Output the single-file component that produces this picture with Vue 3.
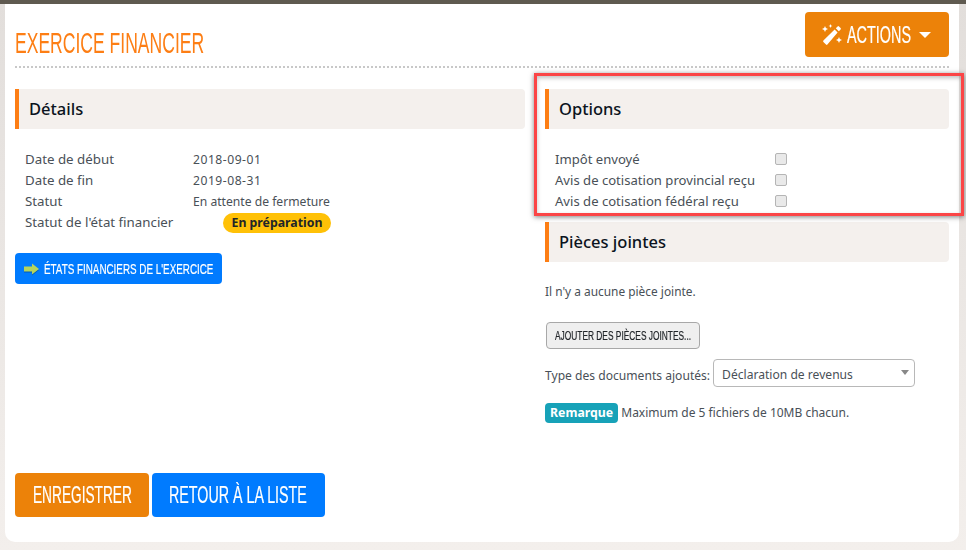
<script setup>
const details = [
  { label: 'Date de début', value: '2018-09-01', date: true },
  { label: 'Date de fin', value: '2019-08-31', date: true },
  { label: 'Statut', value: 'En attente de fermeture', date: false },
]
const options = ['Impôt envoyé', 'Avis de cotisation provincial reçu', 'Avis de cotisation fédéral reçu']
</script>

<template>
  <div class="page">
    <main class="card">
      <header class="top">
        <h1><span class="cond t-title">EXERCICE FINANCIER</span></h1>
        <button class="btn orange actions">
          <svg class="wand" viewBox="0 0 22 22" width="22" height="22" fill="#fff">
            <path d="M14.800 4.200 16.600 2.400a1 1 0 0 1 1.400 0l1.600 1.600a1 1 0 0 1 0 1.400l-1.800 1.800zM13.600 5.400 16.600 8.400 6.400 20.600a1 1 0 0 1-1.400 0L2.400 18a1 1 0 0 1 0-1.400z" />
            <path d="M4 2l.9 2.100L7 5l-2.100.9L4 8l-.9-2.100L1 5l2.100-.9zM9.500 0l.6 1.400 1.400.6-1.400.6-.6 1.400-.6-1.400-1.400-.6 1.400-.6zM18 13l.9 2.100 2.100.9-2.100.9-.9 2.100-.9-2.100-2.100-.9 2.100-.9z" />
          </svg>
          <span class="cond t-actions">ACTIONS</span>
          <i class="caret"></i>
        </button>
      </header>
      <div class="dots"></div>

      <div class="columns">
        <section class="left">
          <h2 class="bar">Détails</h2>
          <dl class="details">
            <div v-for="d in details" :key="d.label" class="row">
              <dt>{{ d.label }}</dt>
              <dd :class="{ date: d.date }">{{ d.value }}</dd>
            </div>
            <div class="row">
              <dt>Statut de l'état financier</dt>
              <dd><span class="pill">En préparation</span></dd>
            </div>
          </dl>
          <button class="btn blue small">
            <svg class="arrow" viewBox="0 0 15 12" width="15" height="12">
              <path d="M0 3.500h8V0.500L15 6l-7 5.500V8.500H0z" fill="#b5d35c" />
            </svg>
            <span class="cond t-states">ÉTATS FINANCIERS DE L'EXERCICE</span>
          </button>
        </section>

        <section class="right">
          <h2 class="bar">Options</h2>
          <div class="options">
            <label v-for="o in options" :key="o" class="opt">
              <span class="opt-label">{{ o }}</span>
              <span class="check"></span>
            </label>
          </div>
          <h2 class="bar second">Pièces jointes</h2>
          <p class="none">Il n'y a aucune pièce jointe.</p>
          <button class="add"><span class="cond t-add">AJOUTER DES PIÈCES JOINTES...</span></button>
          <div class="doc-type">
            <span class="doc-label">Type des documents ajoutés:</span>
            <div class="select">
              <span>Déclaration de revenus</span>
              <i class="sel-caret"></i>
            </div>
          </div>
          <p class="note"><span class="tag">Remarque</span> Maximum de 5 fichiers de 10MB chacun.</p>
        </section>
      </div>

      <footer class="foot">
        <button class="btn orange big save"><span class="cond t-save">ENREGISTRER</span></button>
        <button class="btn blue big back"><span class="cond t-back">RETOUR À LA LISTE</span></button>
      </footer>

      <div class="highlight"></div>
    </main>
  </div>
</template>

<style>
html, body { margin: 0; background: #f3efec; }
</style>

<style scoped>
.page {
  width: 966px;
  height: 550px;
  box-sizing: border-box;
  border-top: 4px solid #5f5a50;
  padding: 0 7px 8px 5px;
  background: linear-gradient(#e2dedb, #f3efec);
  font-family: "Noto Sans", "Open Sans", sans-serif;
  font-size: 12px;
  color: #495057;
  overflow: hidden;
}
.card {
  position: relative;
  height: 538px;
  box-sizing: border-box;
  background: #fff;
  border-radius: 0 0 10px 10px;
  padding: 8px 10px 0;
}
.top {
  display: flex;
  justify-content: space-between;
  align-items: flex-start;
  height: 51px;
}
h1 {
  margin: 14px 0 0;
  font-weight: 400;
  font-size: 29px;
  line-height: 34px;
  color: #fd7e14;
}
.cond {
  display: block;
  flex: none;
  white-space: nowrap;
  text-align: left;
  font-family: "Liberation Sans", sans-serif;
  transform-origin: left center;
  -webkit-text-stroke: 0.2px currentColor;
}
.t-title { width: 189px; transform: scaleX(0.605); -webkit-text-stroke: 0; }
.t-actions { width: 64px; transform: scaleX(0.6); }
.t-states { width: 170px; transform: scaleX(0.703); }
.t-add { width: 136px; transform: scaleX(0.643); }
.t-save { width: 98px; transform: scaleX(0.57); }
.t-back { width: 138px; transform: scaleX(0.595); margin-left: -1px; }
button { border: 0; cursor: pointer; padding: 0; }
.btn {
  display: inline-flex;
  align-items: center;
  justify-content: center;
  color: #fff;
  border-radius: 4px;
}
.orange { background: #ec8209; }
.blue { background: #007bff; }
.actions {
  width: 144px;
  height: 45px;
  font-size: 24px;
  gap: 4px;
  padding-right: 2px;
  box-sizing: border-box;
}
.wand, .arrow { flex: none; }
.arrow { filter: drop-shadow(0 1px 0 rgba(0, 40, 80, 0.4)); }
.caret {
  flex: none;
  margin-left: 4px;
  border: 6.500px solid transparent;
  border-top: 6px solid #fff;
  border-bottom: 0;
}
.dots {
  border-top: 2px dotted #c8c8c8;
  margin: 3px 0 0;
}
.columns {
  display: flex;
  margin-top: 21px;
  height: 384px;
}
.left { width: 510px; margin-right: 20px; }
.right { width: 404px; }
.bar {
  margin: 0;
  height: 40px;
  box-sizing: border-box;
  border-left: 4px solid #fd7e14;
  border-radius: 0 4px 4px 0;
  background: #f4f0ed;
  padding-left: 10px;
  font-size: 16.500px;
  font-weight: 500;
  line-height: 40px;
  color: #0b1320;
}
.details {
  margin: 20px 0 0 10px;
}
.row {
  display: flex;
  height: 21px;
  line-height: 21px;
  font-size: 13.300px;
}
dt { width: 168px; }
dd { margin: 0; font-size: 12.150px; flex: 1; }
dd.date { letter-spacing: 0.5px; }
.pill {
  display: inline-block;
  margin-left: 30px;
  height: 20px;
  line-height: 19px;
  padding: 0 8.500px;
  border-radius: 10px;
  background: #ffc107;
  color: #212529;
  font-weight: 700;
  font-size: 12.300px;
}
.small {
  margin-top: 20px;
  width: 207px;
  height: 31px;
  font-size: 14px;
  gap: 5px;
}
.options { margin: 19px 0 0 10px; height: 74px; }
.opt {
  display: flex;
  align-items: center;
  height: 21px;
  font-size: 13.100px;
}
.opt-label { width: 220px; }
.check {
  width: 12px;
  height: 12px;
  margin-top: 1px;
  box-sizing: border-box;
  background: #e9e9e9;
  border: 1px solid #b5b5b5;
  border-radius: 2px;
}
.none {
  margin: 21px 0 0;
  font-size: 11.900px;
  line-height: 16px;
}
.add {
  display: flex;
  align-items: center;
  justify-content: center;
  margin: 23px 0 0 1px;
  width: 154px;
  height: 27px;
  background: #efefef;
  border: 1px solid #a8a8a8;
  border-radius: 4px;
  color: #212529;
  font-size: 13px;
}
.doc-type {
  display: flex;
  align-items: center;
  gap: 3px;
  margin-top: 10px;
  font-size: 12.100px;
}
.doc-label { padding-top: 5px; }
.select {
  position: relative;
  width: 202px;
  height: 28px;
  box-sizing: border-box;
  border: 1px solid #b8b8b8;
  border-radius: 4px;
  padding-left: 8px;
  line-height: 29px;
  font-size: 12.100px;
}
.sel-caret {
  position: absolute;
  right: 5px;
  top: 10px;
  border: 4.500px solid transparent;
  border-top: 5px solid #888;
  border-bottom: 0;
}
.note {
  margin: 16px 0 0;
  font-size: 12px;
  line-height: 20px;
}
.tag {
  display: inline-block;
  background: #17a2b8;
  color: #fff;
  font-weight: 700;
  font-size: 12.300px;
  border-radius: 4px;
  padding: 0 5px;
  height: 20px;
  line-height: 19px;
}
.foot {
  display: flex;
  gap: 3px;
}
.big { height: 44px; font-size: 24px; }
.save { width: 134px; }
.back { width: 173px; }
.highlight {
  position: absolute;
  left: 529px;
  top: 69px;
  width: 430px;
  height: 143px;
  box-sizing: border-box;
  border: 3px solid #fb4546;
  box-shadow: 0 1px 5px rgba(0, 0, 0, 0.5), inset 0 2px 4px rgba(0, 0, 0, 0.25);
  pointer-events: none;
}
</style>
